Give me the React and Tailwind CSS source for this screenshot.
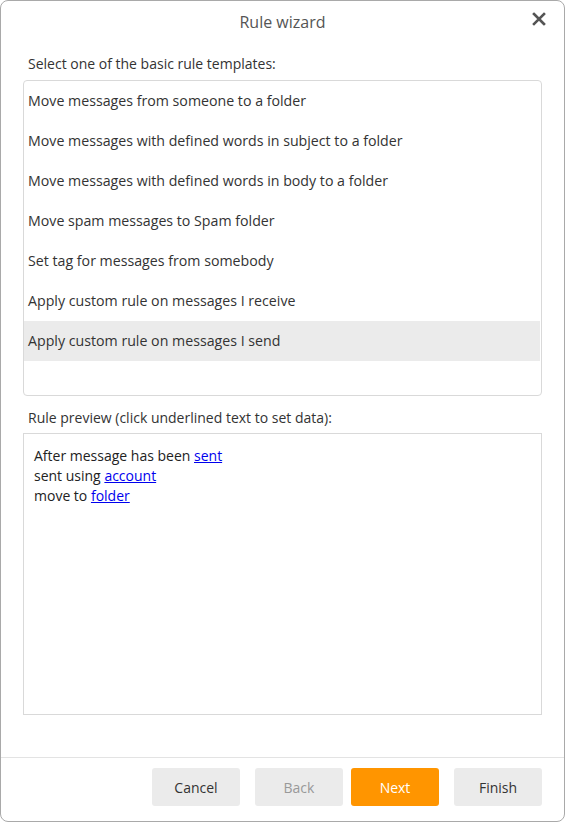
export default function App() {
  const templates = [
    'Move messages from someone to a folder',
    'Move messages with defined words in subject to a folder',
    'Move messages with defined words in body to a folder',
    'Move spam messages to Spam folder',
    'Set tag for messages from somebody',
    'Apply custom rule on messages I receive',
    'Apply custom rule on messages I send',
  ];
  const selected = 6;

  return (
    <div
      className="w-[565px] h-[822px] bg-white border border-[#a9a9a9] rounded-[8px] flex flex-col text-[#333] overflow-hidden"
      style={{ fontFamily: '"Open Sans", "Noto Sans", sans-serif' }}
    >
      {/* Title bar */}
      <div className="relative h-[42px] flex items-center justify-center">
        <span className="text-[16px] text-[#555]">Rule wizard</span>
        <button className="absolute right-[16px] top-[8px] w-[18px] h-[20px] flex items-center justify-center">
          <svg width="14" height="14" viewBox="0 0 14 14">
            <path d="M2 2 L12 12 M12 2 L2 12" stroke="#555" strokeWidth="2.6" strokeLinecap="square" />
          </svg>
        </button>
      </div>

      <div className="flex-1 flex flex-col px-[22px]">
        <div className="text-[14px] pl-[5px] pt-[11px] pb-[6px] leading-[20px]">
          Select one of the basic rule templates:
        </div>

        {/* Template list */}
        <div className="h-[316px] border border-[#d9d9d9] rounded-[4px] flex flex-col pr-[1px]">
          {templates.map((t, i) => (
            <div
              key={i}
              className={
                'h-[40px] flex items-center pl-[4px] text-[14.2px] text-[#333] ' +
                (i === selected ? 'bg-[#ebebeb]' : '')
              }
            >
              {t}
            </div>
          ))}
        </div>

        <div className="text-[14px] pl-[5px] pt-[12px] pb-[5px] leading-[20px]">
          Rule preview (click underlined text to set data):
        </div>

        {/* Preview box */}
        <div className="h-[282px] border border-[#d9d9d9] px-[10px] pt-[12px] pb-[10px] text-[14px] leading-[20px] text-[#222]">
          <div>
            After message has been <a className="underline text-[#0000ee]">sent</a>
          </div>
          <div>
            sent using <a className="underline text-[#0000ee]">account</a>
          </div>
          <div>
            move to <a className="underline text-[#0000ee]">folder</a>
          </div>
        </div>
      </div>

      {/* Footer */}
      <div className="border-t border-[#e3e3e3] h-[64px] flex items-start justify-end pt-[10px] pr-[22px]">
        <button className="w-[88px] h-[38px] rounded-[3px] bg-[#ebebeb] text-[14px] text-[#333]">Cancel</button>
        <button className="w-[88px] h-[38px] rounded-[3px] bg-[#ebebeb] text-[14px] text-[#999] ml-[15px]">Back</button>
        <button className="w-[88px] h-[38px] rounded-[3px] bg-[#ff9500] text-[14px] text-white ml-[8px]">Next</button>
        <button className="w-[88px] h-[38px] rounded-[3px] bg-[#ebebeb] text-[14px] text-[#333] ml-[15px]">Finish</button>
      </div>
    </div>
  );
}
